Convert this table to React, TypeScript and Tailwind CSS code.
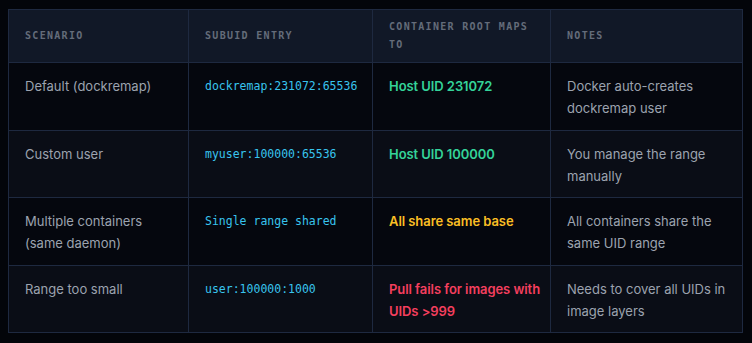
import React from "react";

const mono = { fontFamily: '"DejaVu Sans Mono", "Liberation Mono", monospace' };

type Row = {
  scenario: string;
  entry: string;
  maps: string;
  mapsColor: string;
  notes: string;
  bg: string;
  pb: string;
};

const rows: Row[] = [
  {
    scenario: "Default (dockremap)",
    entry: "dockremap:231072:65536",
    maps: "Host UID 231072",
    mapsColor: "text-[#34d399]",
    notes: "Docker auto-creates dockremap user",
    bg: "bg-[#05070e]",
    pb: "pb-[11px]",
  },
  {
    scenario: "Custom user",
    entry: "myuser:100000:65536",
    maps: "Host UID 100000",
    mapsColor: "text-[#34d399]",
    notes: "You manage the range manually",
    bg: "bg-[#0a0d16]",
    pb: "pb-[10px]",
  },
  {
    scenario: "Multiple containers (same daemon)",
    entry: "Single range shared",
    maps: "All share same base",
    mapsColor: "text-[#fbbf24]",
    notes: "All containers share the same UID range",
    bg: "bg-[#05070e]",
    pb: "pb-[11px]",
  },
  {
    scenario: "Range too small",
    entry: "user:100000:1000",
    maps: "Pull fails for images with UIDs >999",
    mapsColor: "text-[#f43f5e]",
    notes: "Needs to cover all UIDs in image layers",
    bg: "bg-[#0a0d16]",
    pb: "pb-[10px]",
  },
];

const headers = ["Scenario", "Subuid Entry", "Container Root Maps To", "Notes"];

export default function App() {
  return (
    <div
      className="min-h-[343px] w-[752px] bg-[#03050a] pl-2 pt-[9px]"
      style={{ fontFamily: 'Inter, "Noto Sans", sans-serif' }}
    >
      <div className="grid w-[735px] grid-cols-[180px_184px_178px_192px] border-l border-t border-[#1e2940]">
        {headers.map((h) => (
          <div
            key={h}
            className="flex h-[53px] items-center border-b border-r border-[#1e2940] bg-[#111827] px-4 text-[10px] font-bold uppercase leading-[18px] tracking-[0.13em] text-[#646c7a]"
            style={mono}
          >
            {h}
          </div>
        ))}
        {rows.map((r) => (
          <React.Fragment key={r.scenario}>
            <div
              className={`border-b border-r border-[#1e2940] ${r.bg} px-4 ${r.pb} pt-3 text-[13px] leading-[22px] text-[#9ca3af]`}
            >
              {r.scenario}
            </div>
            <div
              className={`border-b border-r border-[#1e2940] ${r.bg} px-4 ${r.pb} pt-3 text-[11.5px] leading-[22px] text-[#38c4ee]`}
              style={mono}
            >
              {r.entry}
            </div>
            <div
              className={`border-b border-r border-[#1e2940] ${r.bg} pl-4 pr-2 ${r.pb} pt-3 text-[13px] font-semibold leading-[22px] tracking-[-0.005em] ${r.mapsColor}`}
            >
              {r.maps}
            </div>
            <div
              className={`border-b border-r border-[#1e2940] ${r.bg} px-4 ${r.pb} pt-3 text-[13px] leading-[22px] text-[#9ca3af]`}
            >
              {r.notes}
            </div>
          </React.Fragment>
        ))}
      </div>
    </div>
  );
}
